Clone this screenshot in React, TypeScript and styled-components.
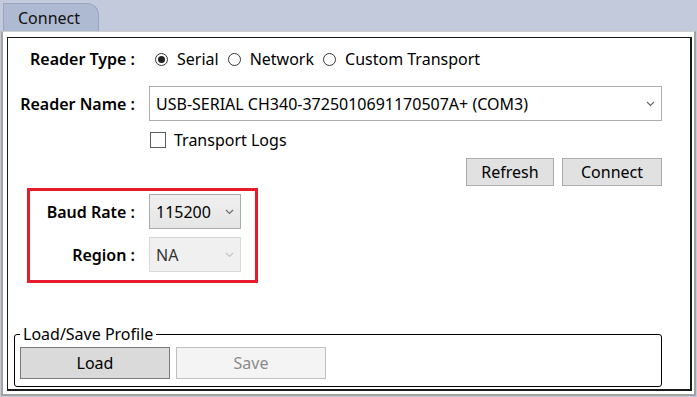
import React from "react";
import styled, { createGlobalStyle } from "styled-components";

const Global = createGlobalStyle`
  html, body { margin: 0; padding: 0; background: #ffffff; }
  body { font-family: "Noto Sans", "Open Sans", sans-serif; font-size: 16px; color: #000; }
  * { box-sizing: border-box; }
`;

const Root = styled.div`
  width: 697px;
  height: 397px;
  display: flex;
  flex-direction: column;
  background: #c2cadc;
  overflow: hidden;
`;

const TabStrip = styled.div`
  height: 31px;
  flex: none;
  display: flex;
  align-items: flex-end;
  padding-left: 3px;
`;

const Tab = styled.div`
  width: 96px;
  height: 28px;
  background: #aebad2;
  border: 1px solid #9aa6bf;
  border-bottom: none;
  border-radius: 0 12px 0 0;
  display: flex;
  align-items: center;
  padding-left: 14px;
  font-size: 16px;
  color: #111;
`;

const Frame = styled.div`
  flex: 1;
  margin: 0 1px 1px 1px;
  background: #ffffff;
  border: 2px solid #a3a3a3;
  border-top: 1px solid #cfcfcf;
  padding: 5px 2px 3px 4px;
  display: flex;
`;

const Inner = styled.div`
  flex: 1;
  border: 1px solid #1a1a1a;
  border-right-width: 2px;
  border-bottom-width: 2px;
  display: flex;
  flex-direction: column;
  padding: 9px 0 1px 0;
`;

const Row = styled.div<{ $h: number; $mt?: number }>`
  display: flex;
  align-items: center;
  height: ${(p) => p.$h}px;
  margin-top: ${(p) => p.$mt ?? 0}px;
`;

const Label = styled.div<{ $w: number }>`
  width: ${(p) => p.$w}px;
  flex: none;
  text-align: right;
  font-weight: 600;
  font-size: 16px;
  margin-right: 14px;
  white-space: nowrap;
`;

const Spacer = styled.div<{ $w: number }>`
  width: ${(p) => p.$w}px;
  flex: none;
`;

const RadioGroup = styled.div`
  display: flex;
  align-items: center;
  margin-left: 6px;
`;

const RadioItem = styled.label`
  display: flex;
  align-items: center;
  margin-right: 9px;
  font-size: 16px;
  white-space: nowrap;
`;

const RadioCircle = styled.span<{ $checked?: boolean }>`
  width: 13px;
  height: 13px;
  border: 1px solid #333;
  border-radius: 50%;
  display: inline-flex;
  align-items: center;
  justify-content: center;
  margin-right: 9px;
  &::after {
    content: "";
    width: 7px;
    height: 7px;
    border-radius: 50%;
    background: ${(p) => (p.$checked ? "#222" : "transparent")};
  }
`;

const Combo = styled.div<{ $w: number; $variant?: "white" | "gray" | "disabled" }>`
  width: ${(p) => p.$w}px;
  height: 35px;
  flex: none;
  display: flex;
  align-items: center;
  justify-content: space-between;
  padding: 0 6px 0 6px;
  font-size: 16px;
  white-space: nowrap;
  border: 1px solid
    ${(p) => (p.$variant === "disabled" ? "#d9d9d9" : "#acacac")};
  background: ${(p) =>
    p.$variant === "gray"
      ? "linear-gradient(#f0f0f0, #e5e5e5)"
      : p.$variant === "disabled"
      ? "#f0f0f0"
      : "#ffffff"};
  color: ${(p) => (p.$variant === "disabled" ? "#333" : "#000")};
`;

const Chevron = ({ light }: { light?: boolean }) => (
  <svg width="9" height="6" viewBox="0 0 9 6">
    <path
      d="M1 1 L4.5 4.5 L8 1"
      fill="none"
      stroke={light ? "#c4c4c4" : "#6a6a6a"}
      strokeWidth="1.2"
    />
  </svg>
);

const CheckRow = styled.label`
  display: flex;
  align-items: center;
  font-size: 16px;
  margin-left: 1px;
`;

const CheckBox = styled.span`
  width: 16px;
  height: 16px;
  border: 1px solid #5c5c5c;
  background: #fff;
  margin-right: 8px;
`;

const ButtonBar = styled.div`
  display: flex;
  justify-content: flex-end;
  gap: 8px;
  padding-right: 28px;
  margin-top: 8px;
`;

const Button = styled.div<{ $w: number; $h: number; $variant?: "normal" | "pressed" | "disabled" }>`
  width: ${(p) => p.$w}px;
  height: ${(p) => p.$h}px;
  display: flex;
  align-items: center;
  justify-content: center;
  font-size: 16px;
  background: ${(p) =>
    p.$variant === "disabled" ? "#f4f4f4" : p.$variant === "pressed" ? "#dadada" : "#e1e1e1"};
  border: 1px solid
    ${(p) =>
      p.$variant === "disabled" ? "#bfbfbf" : p.$variant === "pressed" ? "#7a7a7a" : "#adadad"};
  color: ${(p) => (p.$variant === "disabled" ? "#8a8a8a" : "#000")};
`;

const Highlight = styled.div`
  margin-top: 2px;
  margin-left: 19px;
  width: 231px;
  height: 95px;
  border: 3px solid #e81b2b;
  padding: 3px 0 0 0;
  display: flex;
  flex-direction: column;
  gap: 8px;
`;

const HRow = styled.div`
  display: flex;
  align-items: center;
`;

const Group = styled.fieldset`
  margin: auto 28px 1px 6px;
  border: 1px solid #000;
  border-radius: 3px;
  padding: 0 5px 7px 5px;
  display: flex;
  gap: 6px;
`;

const Legend = styled.legend`
  padding: 0 3px;
  font-size: 16px;
  line-height: 26px;
`;

export default function App() {
  return (
    <Root>
      <Global />
      <TabStrip>
        <Tab>Connect</Tab>
      </TabStrip>
      <Frame>
        <Inner>
          <Row $h={24}>
            <Label $w={127}>Reader Type :</Label>
            <RadioGroup>
              <RadioItem>
                <RadioCircle $checked />
                Serial
              </RadioItem>
              <RadioItem>
                <RadioCircle />
                Network
              </RadioItem>
              <RadioItem>
                <RadioCircle />
                Custom Transport
              </RadioItem>
            </RadioGroup>
          </Row>
          <Row $h={35} $mt={15}>
            <Label $w={127}>Reader Name :</Label>
            <Combo $w={513} $variant="white">
              <span>USB-SERIAL CH340-3725010691170507A+ (COM3)</span>
              <Chevron />
            </Combo>
          </Row>
          <Row $h={20} $mt={9}>
            <Spacer $w={141} />
            <CheckRow>
              <CheckBox />
              Transport Logs
            </CheckRow>
          </Row>
          <ButtonBar>
            <Button $w={88} $h={28}>Refresh</Button>
            <Button $w={100} $h={28}>Connect</Button>
          </ButtonBar>
          <Highlight>
            <HRow>
              <Label $w={105}>Baud Rate :</Label>
              <Combo $w={92} $variant="gray">
                <span>115200</span>
                <Chevron />
              </Combo>
            </HRow>
            <HRow>
              <Label $w={105}>Region :</Label>
              <Combo $w={92} $variant="disabled">
                <span>NA</span>
                <Chevron light />
              </Combo>
            </HRow>
          </Highlight>
          <Group>
            <Legend>Load/Save Profile</Legend>
            <Button $w={150} $h={32} $variant="pressed">Load</Button>
            <Button $w={150} $h={32} $variant="disabled">Save</Button>
          </Group>
        </Inner>
      </Frame>
    </Root>
  );
}
